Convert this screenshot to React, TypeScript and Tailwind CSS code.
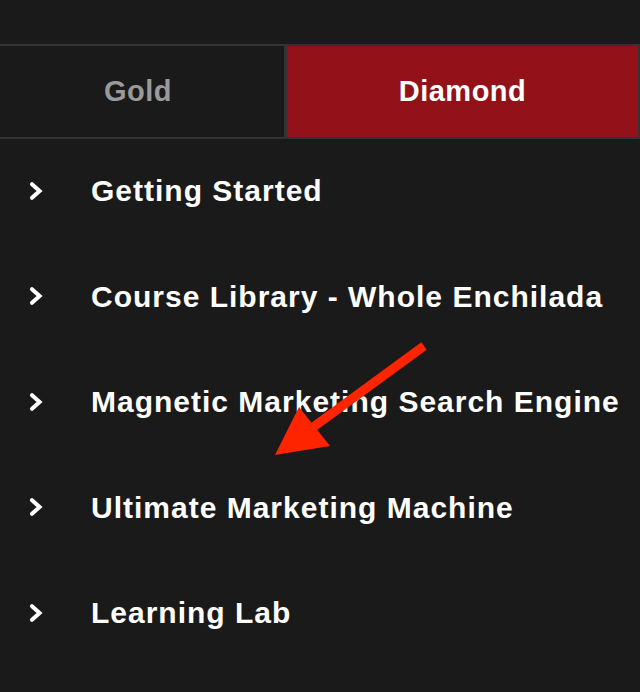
import React from "react";

const items = [
  "Getting Started",
  "Course Library - Whole Enchilada",
  "Magnetic Marketing Search Engine",
  "Ultimate Marketing Machine",
  "Learning Lab",
];

const Chevron = () => (
  <svg width="16" height="20" viewBox="0 0 16 20" className="shrink-0">
    <path
      d="M4 3.2 L11.6 10 L4 16.8"
      fill="none"
      stroke="#ffffff"
      strokeWidth="4"
      strokeLinecap="round"
      strokeLinejoin="miter"
    />
  </svg>
);

const App = () => {
  return (
    <div
      className="relative w-[640px] h-[692px] overflow-hidden bg-[#1a1a1a]"
      style={{ fontFamily: '"Liberation Sans", Arial, sans-serif' }}
    >
      <div className="h-[44px]" />

      {/* tabs */}
      <div className="flex h-[95px] border-y-2 border-[#333333]">
        <div className="flex w-[284px] items-center justify-center pr-[8px] text-[29px] font-bold tracking-[0.5px] text-[#9a9a9a]">
          Gold
        </div>
        <div className="flex flex-1 items-center justify-center border-l-[3px] border-r-2 border-[#333333] bg-[#931219] text-[29px] font-bold tracking-[0.5px] text-white">
          Diamond
        </div>
      </div>

      {/* menu */}
      <ul className="flex flex-col">
        {items.map((label) => (
          <li key={label} className="flex h-[105.5px] items-center pb-[2px]">
            <div className="flex w-[91px] pl-[28px]">
              <Chevron />
            </div>
            <span className="whitespace-nowrap text-[30px] font-bold tracking-[1px] text-white">
              {label}
            </span>
          </li>
        ))}
      </ul>

      {/* annotation arrow */}
      <svg
        className="pointer-events-none absolute left-0 top-0"
        width="640"
        height="692"
        viewBox="0 0 640 692"
      >
        <line x1="424" y1="346" x2="312" y2="428" stroke="#ff2400" strokeWidth="9" strokeLinecap="butt" />
        <polygon points="275,455 299,407 330,446" fill="#ff2400" />
      </svg>
    </div>
  );
};

export default App;
